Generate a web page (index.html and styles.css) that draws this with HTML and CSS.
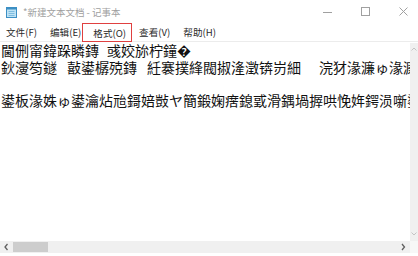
FILE: index.html
```html
<!DOCTYPE html>
<html lang="zh-CN">
<head>
<meta charset="utf-8">
<title>记事本</title>
<link rel="stylesheet" href="styles.css">
</head>
<body>
<div class="win">
  <div class="titlebar">
    <svg class="appicon" width="11" height="11" viewBox="0 0 11 11">
      <rect x="0.5" y="0.5" width="10" height="10" fill="#bfe3f5" stroke="#3d8fc4"/>
      <rect x="0.5" y="0.5" width="10" height="2" fill="#3d8fc4"/>
      <line x1="2.5" y1="4.5" x2="8.5" y2="4.5" stroke="#7fbde0"/>
      <line x1="2.5" y1="6.5" x2="8.5" y2="6.5" stroke="#7fbde0"/>
      <line x1="2.5" y1="8.5" x2="8.5" y2="8.5" stroke="#7fbde0"/>
    </svg>
    <span class="title">*新建文本文档 - 记事本</span>
    <div class="controls">
      <svg class="ctl" width="9" height="9" viewBox="0 0 9 9"><line x1="0" y1="5.5" x2="9" y2="5.5" stroke="#a0a0a0"/></svg>
      <svg class="ctl" width="9" height="9" viewBox="0 0 9 9"><rect x="0.5" y="0.5" width="8" height="8" fill="none" stroke="#a0a0a0"/></svg>
      <svg class="ctl" width="9" height="9" viewBox="0 0 9 9"><path d="M0.5 0.5 L8.5 8.5 M8.5 0.5 L0.5 8.5" stroke="#a0a0a0" fill="none"/></svg>
    </div>
  </div>
  <div class="menubar">
    <span class="mi">文件(F)</span>
    <span class="mi">编辑(E)</span>
    <span class="mi sel">格式(O)</span>
    <span class="mi">查看(V)</span>
    <span class="mi">帮助(H)</span>
  </div>
  <div class="editor">
    <div class="text"><div class="ln">閫侀甯鍏跺瞵鏄<span class="gap s"></span>彧姣旀柠鐘�</div><div class="ln">鈥濅笉鐩<span class="gap"></span>敼鍙樼殑鏄<span class="gap"></span>紝褰撲綘閥掓湰澂锛岃細<span class="gap w"></span>浣犲湪濂ゅ湪濂</div><div class="ln"> </div><div class="ln">鍙板湪姝ゅ鍙瀹炶兘鎶婄敱ヤ簡鍛婅瘔鎴戜滑鍝堝搱哄悗姩鍔涢噺鍙</div></div>
    <div class="vscroll">
      <svg class="sarrow" width="8" height="6" viewBox="0 0 8 6"><path d="M1.5 4.5 L4 2 L6.5 4.5" stroke="#c4c4c4" fill="none"/></svg>
      <svg class="sarrow" width="8" height="6" viewBox="0 0 8 6"><path d="M1.5 1.5 L4 4 L6.5 1.5" stroke="#c4c4c4" fill="none"/></svg>
    </div>
  </div>
  <div class="hscroll">
    <svg class="harrow" width="13" height="12" viewBox="0 0 13 12"><path d="M7.5 3 L5 6 L7.5 9" stroke="#606060" stroke-width="1.3" fill="none"/></svg>
    <div class="thumb"></div>
    <div class="track"></div>
    <svg class="harrow" width="13" height="12" viewBox="0 0 13 12"><path d="M5 3 L7.5 6 L5 9" stroke="#606060" stroke-width="1.3" fill="none"/></svg>
    <div class="corner"></div>
  </div>
</div>
</body>
</html>
```
FILE: styles.css
```css
html, body {
  margin: 0;
  padding: 0;
  background: #ffffff;
}
.win {
  width: 418px;
  height: 256px;
  display: flex;
  flex-direction: column;
  overflow: hidden;
  font-family: "Noto Sans CJK SC", "Noto Sans", sans-serif;
}
.titlebar {
  height: 23px;
  display: flex;
  align-items: center;
  padding-left: 6px;
  box-sizing: border-box;
}
.appicon {
  display: block;
  margin-top: 1px;
}
.title {
  margin-left: 6px;
  font-size: 9.5px;
  color: #a0a0a0;
  line-height: 12px;
}
.controls {
  margin-left: auto;
  display: flex;
  align-items: center;
  gap: 29px;
  padding-right: 10px;
  margin-top: -1px;
}
.ctl {
  display: block;
}
.menubar {
  height: 18px;
  display: flex;
  align-items: stretch;
  border-bottom: 1px solid #ececec;
}
.mi {
  display: flex;
  align-items: center;
  padding: 0 7px 0 6px;
  font-size: 9.6px;
  color: #2a2a2a;
  line-height: 12px;
}
.mi.sel {
  border: 1px solid #e04040;
  padding: 0 5px 0 10px;
  margin-left: -6px;
  margin-right: 1px;
  margin-top: 0;
  margin-bottom: -1px;
}
.editor {
  flex: 1;
  display: flex;
  min-height: 0;
}
.text {
  flex: 1;
  min-width: 0;
  overflow: hidden;
  padding-left: 1px;
  font-size: 14px;
  line-height: 16.7px;
  color: #111111;
  white-space: pre;
}
.ln {
  height: 16.7px;
}
.gap {
  display: inline-block;
  width: 10px;
}
.gap.s {
  width: 8px;
}
.gap.w {
  width: 18px;
}
.vscroll {
  width: 8px;
  background: #f0f0f0;
  display: flex;
  flex-direction: column;
  justify-content: space-between;
  padding: 3px 0 4px;
  margin-top: 1px;
}
.sarrow {
  display: block;
}
.hscroll {
  height: 12px;
  display: flex;
  align-items: stretch;
  background: #f0f0f0;
  margin-bottom: 3px;
}
.harrow {
  display: block;
  flex: none;
}
.thumb {
  width: 35px;
  background: #cdcdcd;
  margin: 1px 0;
}
.track {
  flex: 1;
}
.corner {
  width: 8px;
  background: #f7f7f7;
}
```
